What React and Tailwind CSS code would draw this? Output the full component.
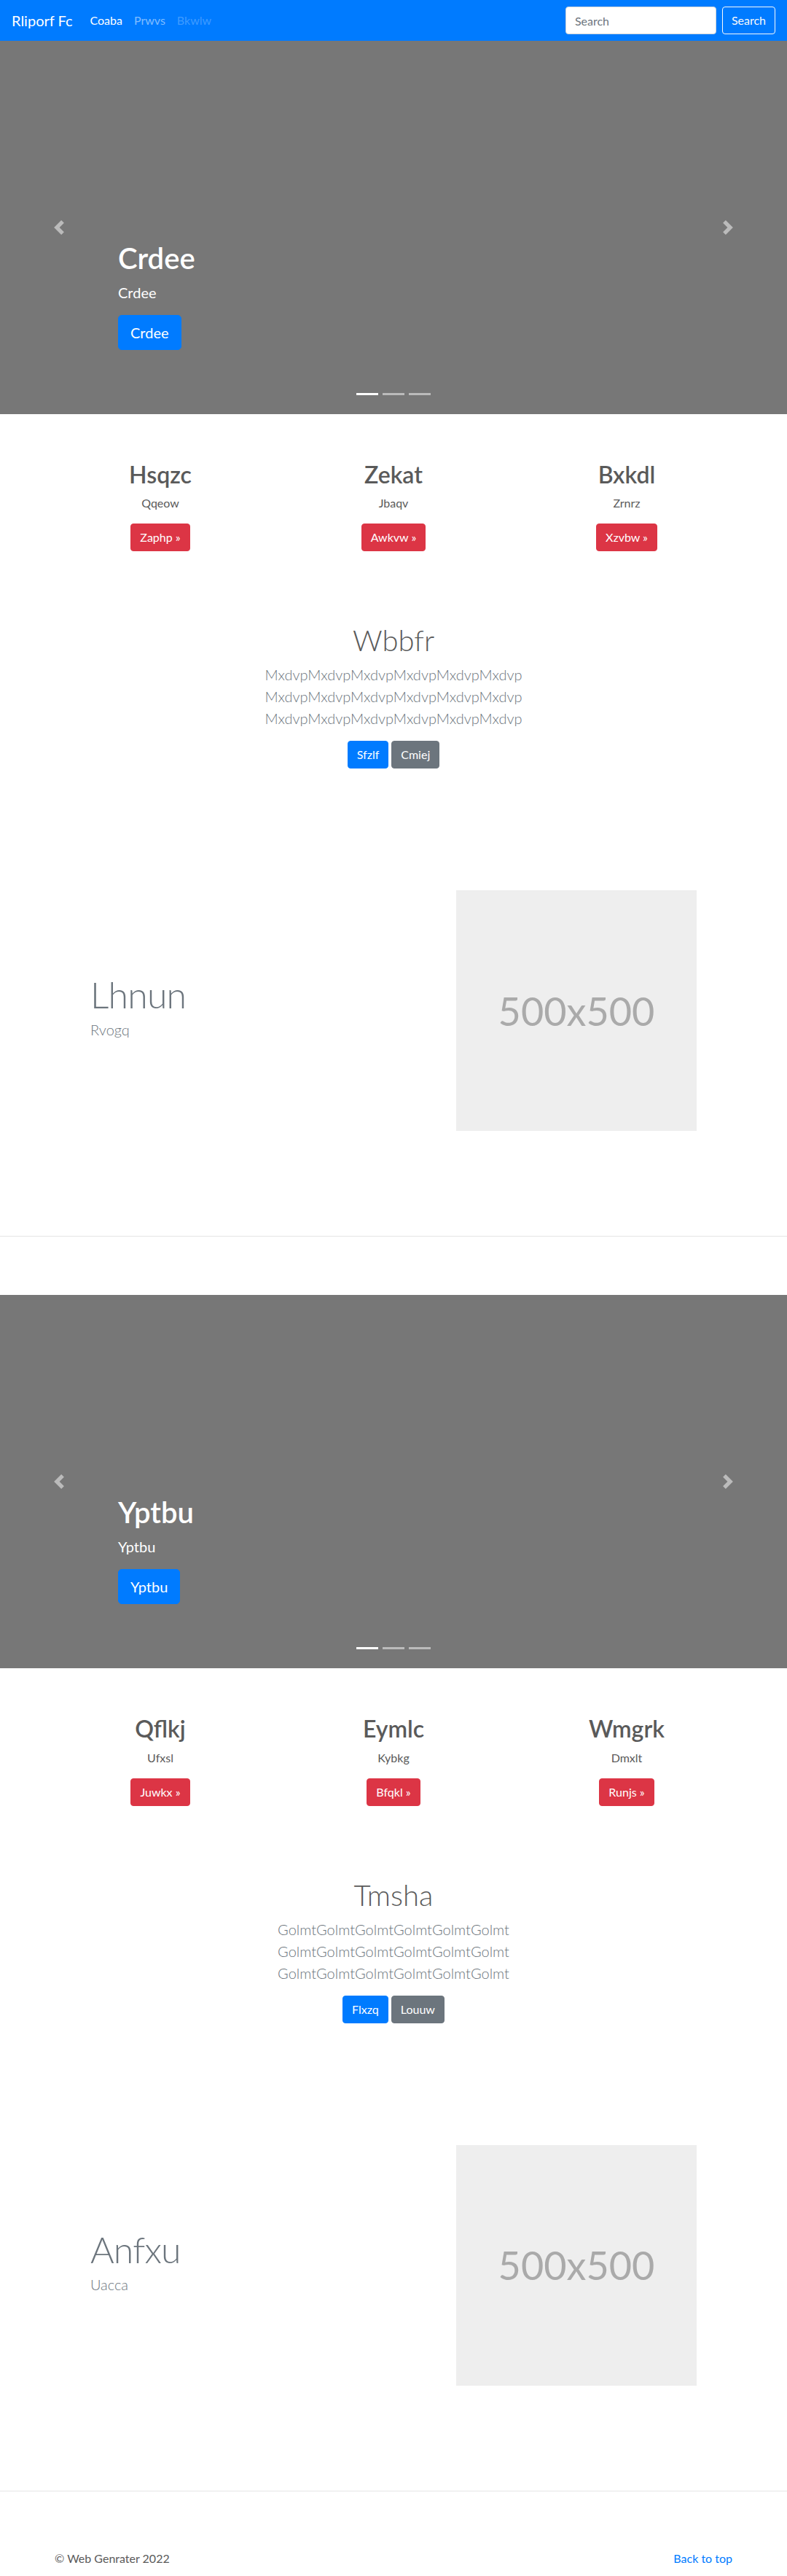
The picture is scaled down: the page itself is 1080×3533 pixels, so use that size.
import React from 'react'

const blocks = [
  {
    slide: 'Crdee',
    cols: [
      ['Hsqzc', 'Qqeow', 'Zaphp'],
      ['Zekat', 'Jbaqv', 'Awkvw'],
      ['Bxkdl', 'Zrnrz', 'Xzvbw'],
    ],
    title: 'Wbbfr',
    word: 'Mxdvp',
    btns: ['Sfzlf', 'Cmiej'],
    feat: ['Lhnun', 'Rvogq'],
  },
  {
    slide: 'Yptbu',
    cols: [
      ['Qflkj', 'Ufxsl', 'Juwkx'],
      ['Eymlc', 'Kybkg', 'Bfqkl'],
      ['Wmgrk', 'Dmxlt', 'Runjs'],
    ],
    title: 'Tmsha',
    word: 'Golmt',
    btns: ['Flxzq', 'Louuw'],
    feat: ['Anfxu', 'Uacca'],
  },
]

const Navbar = () => (
  <nav className="h-14 bg-[#007bff] flex items-center px-4">
    <a href="#" className="text-white text-[20px] leading-[30px] mr-4">Rliporf Fc</a>
    <ul className="flex text-base leading-6">
      <li><a href="#" className="block px-2 py-2 text-white">Coaba</a></li>
      <li><a href="#" className="block px-2 py-2 text-white/50">Prwvs</a></li>
      <li><span className="block px-2 py-2 text-white/25">Bkwlw</span></li>
    </ul>
    <form className="ml-auto flex items-center">
      <input
        type="text"
        placeholder="Search"
        className="w-[207px] h-[38px] px-3 mr-2 rounded bg-white border border-[#ced4da] text-base text-[#495057] placeholder:text-[#6c757d] outline-none"
      />
      <button type="button" className="h-[38px] px-3 rounded border border-[#f8f9fa] text-[#f8f9fa] text-base">
        Search
      </button>
    </form>
  </nav>
)

const Carousel = ({ text }) => (
  <div className="relative h-[512px] bg-[#777]">
    <div className="absolute left-[15%] right-[15%] bottom-12 py-5 text-white">
      <h1 className="text-[40px] leading-[1.2] font-semibold mb-2">{text}</h1>
      <p className="text-[20px] leading-[30px] mb-4">{text}</p>
      <div className="mb-5 flex">
        <a href="#" className="px-4 py-2 text-[20px] leading-[30px] rounded-[5px] border border-[#007bff] bg-[#007bff] text-white">{text}</a>
      </div>
    </div>
    <a href="#" className="absolute left-0 top-0 bottom-0 w-[15%] flex items-center justify-center opacity-50">
      <svg width="20" height="20" viewBox="0 0 8 8" fill="#fff">
        <path d="M5.25 0l-4 4 4 4 1.5-1.5L4.25 4l2.5-2.5L5.25 0z" />
      </svg>
    </a>
    <a href="#" className="absolute right-0 top-0 bottom-0 w-[15%] flex items-center justify-center opacity-50">
      <svg width="20" height="20" viewBox="0 0 8 8" fill="#fff">
        <path d="M2.75 0l-1.5 1.5L3.75 4l-2.5 2.5L2.75 8l4-4-4-4z" />
      </svg>
    </a>
    <ol className="absolute left-0 right-0 bottom-0 mb-4 flex justify-center">
      <li className="w-[30px] h-[3px] mx-[3px] my-[10px] bg-white"></li>
      <li className="w-[30px] h-[3px] mx-[3px] my-[10px] bg-white opacity-50"></li>
      <li className="w-[30px] h-[3px] mx-[3px] my-[10px] bg-white opacity-50"></li>
    </ol>
  </div>
)

const Block = ({ b }) => (
  <div>
    <Carousel text={b.slide} />

    <div className="w-[960px] mx-auto mt-16 grid grid-cols-3">
      {b.cols.map(([head, sub, btn]) => (
        <div key={head} className="px-[15px] mb-6 text-center">
          <h2 className="text-[32px] leading-[1.2] font-semibold text-[#5a5a5a] mb-2">{head}</h2>
          <p className="mx-3 text-base leading-6 text-[#5a5a5a] mb-4">{sub}</p>
          <div className="flex justify-center mb-4">
            <a href="#" className="px-3 py-[6px] text-base leading-6 border border-[#dc3545] bg-[#dc3545] text-white rounded">
              {btn} »
            </a>
          </div>
        </div>
      ))}
    </div>

    <section className="pt-[58px] text-center">
      <h1 className="text-[40px] leading-[1.2] font-light text-[#5a5a5a] mb-2">{b.title}</h1>
      <p className="max-w-[480px] mx-auto text-[20px] leading-[30px] font-light text-[#6c757d] mb-4">
        {b.word.repeat(6)} {b.word.repeat(6)} {b.word.repeat(6)}
      </p>
      <div className="flex justify-center gap-1 mt-[7px]">
        <a href="#" className="px-3 py-[6px] text-base leading-6 border border-[#007bff] bg-[#007bff] text-white rounded">{b.btns[0]}</a>
        <a href="#" className="px-3 py-[6px] text-base leading-6 border border-[#6c757d] bg-[#6c757d] text-white rounded">{b.btns[1]}</a>
      </div>
    </section>

    <div className="w-[930px] mx-auto mt-[167px] flex items-center">
      <div className="flex-1 pl-[49px]">
        <h2 className="text-[50px] leading-none font-light tracking-[-0.8px] text-[#6c757d] mb-2">{b.feat[0]}</h2>
        <p className="text-[20px] leading-[30px] font-light text-[#6c757d] mb-[6px]">{b.feat[1]}</p>
      </div>
      <div className="w-[330px] h-[330px] mr-[49px] bg-[#eee] flex items-center justify-center">
        <span className="text-[54px] text-[#aaa]">500x500</span>
      </div>
    </div>

    <hr className="mt-[144px] mb-20 border-0 border-t border-[#e5e5e5]" />
  </div>
)

const App = () => {
  return (
    <div className="min-h-screen bg-white font-['Lato',sans-serif] text-[#5a5a5a]">
      <Navbar />
      {blocks.map((b) => (
        <Block key={b.slide} b={b} />
      ))}
      <footer className="w-[930px] mx-auto flex justify-between text-base leading-6">
        <p>© Web Genrater 2022</p>
        <a href="#" className="text-[#007bff]">Back to top</a>
      </footer>
    </div>
  )
}

export default App
